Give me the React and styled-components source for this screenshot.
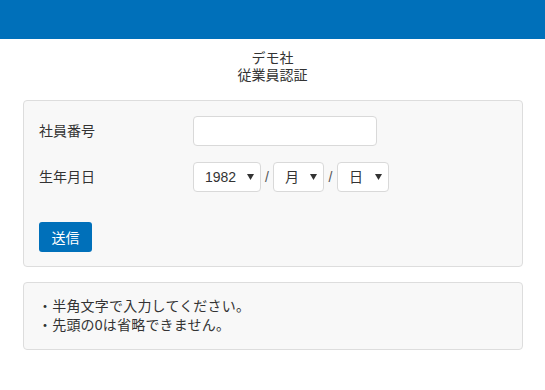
import React from 'react';
import styled, { createGlobalStyle } from 'styled-components';

const GlobalStyle = createGlobalStyle`
  body {
    margin: 0;
    background: #fff;
    font-family: "Liberation Sans", "Noto Sans CJK JP", sans-serif;
    font-size: 14px;
    color: #333;
  }
`;

const Header = styled.header`
  height: 39px;
  background: #0070ba;
`;

const Title = styled.h1`
  margin: 11px 0 16px;
  text-align: center;
  font-size: 14px;
  font-weight: normal;
  line-height: 17px;
`;

const Main = styled.main`
  padding: 0 22px 0 23px;
  display: flex;
  flex-direction: column;
  gap: 15px;
`;

const Panel = styled.div`
  background: #f8f8f8;
  border: 1px solid #dddddd;
  border-radius: 4px;
  padding: ${(p) => p.$pad || '15px 15px'};
`;

const Row = styled.div`
  display: flex;
  align-items: center;
  margin-bottom: ${(p) => p.$mb || 0}px;
`;

const Label = styled.label`
  width: 154px;
  line-height: 20px;
`;

const TextInput = styled.input`
  box-sizing: border-box;
  width: 184px;
  height: 30px;
  border: 1px solid #d9d9d9;
  border-radius: 4px;
  background: #fff;
  outline: none;
`;

const SelectWrap = styled.div`
  position: relative;
  width: ${(p) => p.$w}px;
  height: 30px;
`;

const Select = styled.select`
  appearance: none;
  box-sizing: border-box;
  width: 100%;
  height: 100%;
  border: 1px solid #d9d9d9;
  border-radius: 4px;
  background: #fff;
  padding: 0 0 0 11px;
  font-family: "Liberation Sans", "Noto Sans CJK JP", sans-serif;
  font-size: 14px;
  color: #333;
  outline: none;
`;

const Arrow = styled.svg`
  position: absolute;
  right: 7px;
  top: 12px;
  pointer-events: none;
`;

const Slash = styled.span`
  width: ${(p) => p.$w || 12}px;
  text-align: center;
  color: #555;
`;

const Button = styled.button`
  width: 53px;
  height: 30px;
  border: none;
  border-radius: 3px;
  background: #0070ba;
  color: #fff;
  font-family: "Liberation Sans", "Noto Sans CJK JP", sans-serif;
  font-size: 14px;
`;

const Notes = styled.ul`
  margin: 0;
  padding: 0;
  list-style: none;
  line-height: 19px;
  letter-spacing: 0.2px;
`;

const DateSelect = ({ w, value }) => (
  <SelectWrap $w={w}>
    <Select defaultValue={value}>
      <option>{value}</option>
    </Select>
    <Arrow width="7" height="6" viewBox="0 0 7 6">
      <path d="M0 0 H7 L3.5 6 Z" fill="#333" />
    </Arrow>
  </SelectWrap>
);

export default function App() {
  return (
    <>
      <GlobalStyle />
      <Header />
      <Title>
        デモ社
        <br />
        従業員認証
      </Title>
      <Main>
        <Panel $pad="15px 15px 14px">
          <Row $mb={16}>
            <Label>社員番号</Label>
            <TextInput type="text" />
          </Row>
          <Row $mb={30}>
            <Label>生年月日</Label>
            <DateSelect w={68} value="1982" />
            <Slash>/</Slash>
            <DateSelect w={51} value="月" />
            <Slash $w={13}>/</Slash>
            <DateSelect w={52} value="日" />
          </Row>
          <Row>
            <Button type="button">送信</Button>
          </Row>
        </Panel>
        <Panel $pad="14px 14px">
          <Notes>
            <li>・半角文字で入力してください。</li>
            <li>・先頭の0は省略できません。</li>
          </Notes>
        </Panel>
      </Main>
    </>
  );
}
